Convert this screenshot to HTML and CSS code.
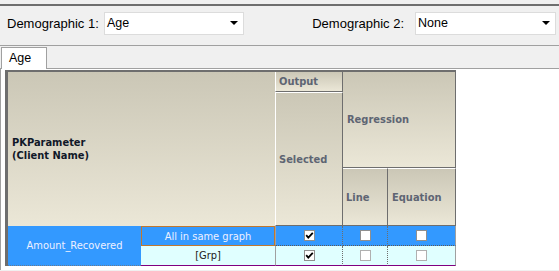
FILE: index.html
```html
<!DOCTYPE html>
<html lang="en">
<head>
    <meta charset="UTF-8">
    <meta name="viewport" content="width=device-width, initial-scale=1.0">
    <title>Demographic Output</title>
    <link rel="stylesheet" href="styles.css">
</head>
<body>
    <div class="topbar"></div>
    <div class="filters">
        <label class="filter-label first">Demographic 1:</label>
        <div class="combo"><span>Age</span><i class="arrow"></i></div>
        <label class="filter-label second">Demographic 2:</label>
        <div class="combo wide"><span>None</span><i class="arrow"></i></div>
    </div>

    <div class="tabs">
        <div class="tab active">Age</div>
    </div>

    <div class="tab-page">
        <div class="grid">
            <!-- header -->
            <div class="hd pk">PKParameter<br>(Client Name)</div>
            <div class="hd output">Output</div>
            <div class="hd regression">Regression</div>
            <div class="hd selected">Selected</div>
            <div class="hd line">Line</div>
            <div class="hd equation">Equation</div>

            <!-- rows -->
            <div class="cell param">Amount_Recovered</div>
            <div class="cell group current">All in same graph</div>
            <div class="cell chk c3 r1"><svg class="box" width="11" height="11"><rect x="0.5" y="0.5" width="10" height="10" fill="#fff" stroke="#8f8f8f"/><path d="M2.2 5.2 L4.3 7.6 L8.8 2.8" fill="none" stroke="#000" stroke-width="1.8"/></svg></div>
            <div class="cell chk c4 r1"><svg class="box" width="11" height="11"><rect x="0.5" y="0.5" width="10" height="10" fill="#fff" stroke="#8f8f8f"/></svg></div>
            <div class="cell chk c5 r1"><svg class="box" width="11" height="11"><rect x="0.5" y="0.5" width="10" height="10" fill="#fff" stroke="#8f8f8f"/></svg></div>

            <div class="cell group alt">[Grp]</div>
            <div class="cell chk c3 r2"><svg class="box" width="11" height="11"><rect x="0.5" y="0.5" width="10" height="10" fill="#fff" stroke="#8f8f8f"/><path d="M2.2 5.2 L4.3 7.6 L8.8 2.8" fill="none" stroke="#000" stroke-width="1.8"/></svg></div>
            <div class="cell chk c4 r2"><svg class="box" width="11" height="11"><rect x="0.5" y="0.5" width="10" height="10" fill="#fff" stroke="#b0b0b0"/></svg></div>
            <div class="cell chk c5 r2"><svg class="box" width="11" height="11"><rect x="0.5" y="0.5" width="10" height="10" fill="#fff" stroke="#b0b0b0"/></svg></div>
        </div>
    </div>
</body>
</html>
```

FILE: styles.css
```css
body {
    margin: 0;
    background-color: #f0f0f0;
    font-family: "Liberation Sans", Arial, sans-serif;
    font-size: 12px;
    color: #000;
    height: 271px;
    overflow: hidden;
}
.topbar {
    height: 4px;
    border-bottom: 2px solid #6e6e6e;
}
.filters {
    display: flex;
    align-items: flex-start;
    height: 40px;
    padding-top: 6px;
    box-sizing: border-box;
    border-bottom: 1px solid #a0a0a0;
}
.filter-label {
    font-size: 13px;
    line-height: 23px;
}
.filter-label.first {
    width: 104px;
    padding-left: 7px;
    box-sizing: border-box;
}
.filter-label.second {
    width: 171px;
    text-align: right;
    padding-right: 11px;
    box-sizing: border-box;
}
.combo {
    position: relative;
    width: 140px;
    height: 23px;
    box-sizing: border-box;
    background-color: #fff;
    border: 1px solid #dcdcdc;
    padding-left: 2px;
    line-height: 20px;
    font-size: 12.5px;
}
.combo.wide {
    width: 141px;
}
.arrow {
    position: absolute;
    right: 5px;
    top: 8px;
    width: 0;
    height: 0;
    border-left: 4px solid transparent;
    border-right: 4px solid transparent;
    border-top: 4px solid #000;
}
.tabs {
    display: flex;
    padding: 1px 0 0 1px;
    height: 22px;
    box-sizing: border-box;
}
.tab {
    position: relative;
    z-index: 1;
    width: 46px;
    height: 22px;
    box-sizing: border-box;
    border: 1px solid #a0a0a0;
    border-bottom: none;
    background-color: #fff;
    padding: 3px 0 0 7px;
    font-size: 12.5px;
}
.tab-page {
    background-color: #fff;
    border-top: 1px solid #a0a0a0;
    border-left: 1px solid #a0a0a0;
    padding: 1px 0 0 4px;
    height: 200px;
}
.grid {
    display: grid;
    grid-template-columns: 133px 134px 68px 45px 68px;
    grid-template-rows: 20px 76px 58px 20px 20px;
    width: max-content;
    border-top: 2px solid #6e6e6e;
    border-left: 3px solid #6e6e6e;
    font-family: "DejaVu Sans Condensed", "DejaVu Sans", sans-serif;
    font-size: 11px;
}
.hd {
    display: flex;
    align-items: center;
    box-sizing: border-box;
    background: linear-gradient(#cbc7b6, #ebe7d7);
    color: #5e6573;
    font-weight: bold;
    border-left: 1px solid #fff;
    border-top: 1px solid #fff;
    border-right: 1px solid #6e6e6e;
    border-bottom: 1px solid #6e6e6e;
    padding-left: 3px;
}
.pk {
    grid-column: 1 / 3;
    grid-row: 1 / 4;
    border: none;
    padding-left: 4px;
    color: #101828;
    line-height: 13px;
}
.output {
    grid-column: 3;
    grid-row: 1;
    border-top: none;
}
.regression {
    grid-column: 4 / 6;
    grid-row: 1 / 3;
    border-top: none;
    border-left: none;
    padding-left: 4px;
}
.selected {
    grid-column: 3;
    grid-row: 2 / 4;
}
.line {
    grid-column: 4;
    grid-row: 3;
    border-left: none;
    padding-left: 3px;
}
.equation {
    grid-column: 5;
    grid-row: 3;
    border-left: none;
    padding-left: 4px;
}
.cell {
    display: flex;
    align-items: center;
    justify-content: center;
    box-sizing: border-box;
}
.param {
    grid-column: 1;
    grid-row: 4 / 6;
    background-color: #3399ff;
    color: #eef0ff;
    border-bottom: 1px dotted #6a7a90;
}
.group {
    grid-column: 2;
}
.group.current {
    grid-row: 4;
    background-color: #3399ff;
    color: #eef0ff;
    border: 1px solid #c0782e;
}
.group.alt {
    grid-row: 5;
    background-color: #e0ffff;
    color: #202020;
    border-bottom: 1px solid #800080;
}
.chk {
    border-right: 1px dotted #6e6e6e;
}
.chk.r1 {
    grid-row: 4;
    background-color: #3399ff;
    border-bottom: 1px dotted #5a5a5a;
}
.chk.r2 {
    grid-row: 5;
    background-color: #e0ffff;
    border-bottom: 1px solid #800080;
}
.c3 {
    grid-column: 3;
    border-left: 1px solid #a0a0a0;
}
.c4 {
    grid-column: 4;
}
.c5 {
    grid-column: 5;
    border-right: 1px solid #a0a0a0;
}
.box {
    display: block;
}
```
